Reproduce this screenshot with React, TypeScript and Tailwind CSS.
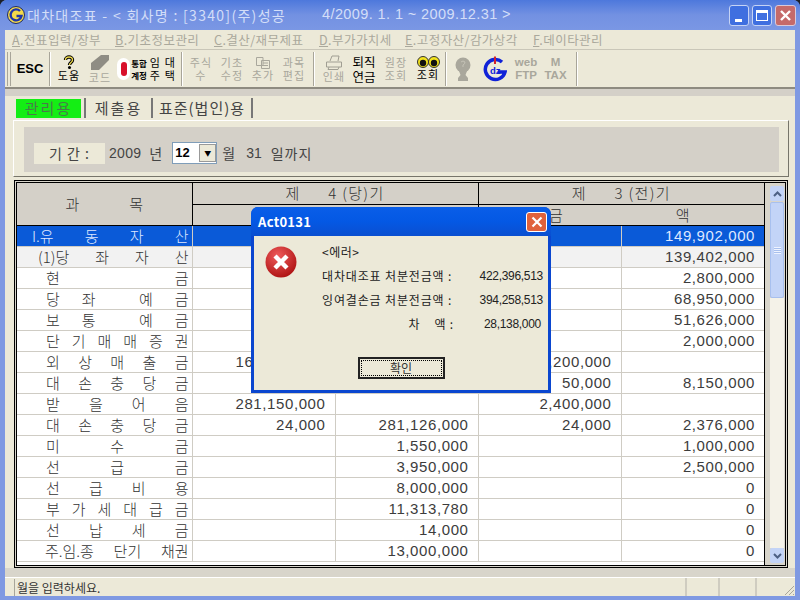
import * as React from "react";

const rows: { label: string[]; start: string; c: string[]; kind?: string }[] = [
  { label: ["I.유", "동", "자", "산"], start: "pl-[15px]", c: ["", "", "", "149,902,000"], kind: "sel" },
  { label: ["(1)당", "좌", "자", "산"], start: "pl-[21px]", c: ["", "", "", "139,402,000"], kind: "sub" },
  { label: ["현", "금"], start: "pl-[29px]", c: ["", "", "", "2,800,000"] },
  { label: ["당", "좌", "", "예", "금"], start: "pl-[29px]", c: ["", "", "", "68,950,000"] },
  { label: ["보", "통", "", "예", "금"], start: "pl-[29px]", c: ["", "", "", "51,626,000"] },
  { label: ["단", "기", "매", "매", "증", "권"], start: "pl-[29px]", c: ["", "", "", "2,000,000"] },
  { label: ["외", "상", "매", "출", "금"], start: "pl-[29px]", c: ["168,000,000", "", "8,200,000", ""] },
  { label: ["대", "손", "충", "당", "금"], start: "pl-[29px]", c: ["", "", "50,000", "8,150,000"] },
  { label: ["받", "을", "어", "음"], start: "pl-[29px]", c: ["281,150,000", "", "2,400,000", ""] },
  { label: ["대", "손", "충", "당", "금"], start: "pl-[29px]", c: ["24,000", "281,126,000", "24,000", "2,376,000"] },
  { label: ["미", "수", "금"], start: "pl-[29px]", c: ["", "1,550,000", "", "1,000,000"] },
  { label: ["선", "급", "금"], start: "pl-[29px]", c: ["", "3,950,000", "", "2,500,000"] },
  { label: ["선", "급", "비", "용"], start: "pl-[29px]", c: ["", "8,000,000", "", "0"] },
  { label: ["부", "가", "세", "대", "급", "금"], start: "pl-[29px]", c: ["", "11,313,780", "", "0"] },
  { label: ["선", "납", "세", "금"], start: "pl-[29px]", c: ["", "14,000", "", "0"] },
  { label: ["주.임.종", "단기", "채권"], start: "pl-[28px]", c: ["", "13,000,000", "", "0"] },
];

const menus = [
  { key: "A", text: ".전표입력/장부", w: "w-[103px]" },
  { key: "B", text: ".기초정보관리", w: "w-[99px]" },
  { key: "C", text: ".결산/재무제표", w: "w-[105px]" },
  { key: "D", text: ".부가가치세", w: "w-[86px]" },
  { key: "E", text: ".고정자산/감가상각", w: "w-[128px]" },
  { key: "F", text: ".데이타관리", w: "w-[90px]" },
];

function Sep() {
  return <div className="mx-[3px] h-[34px] w-[2px] shrink-0 border-l border-r border-l-[#a8a599] border-r-white" />;
}

function Tool({ w, top, bottom, dim }: { w: string; top?: React.ReactNode; bottom: React.ReactNode; dim?: boolean }) {
  return (
    <div className={`${w} flex shrink-0 flex-col items-center justify-center text-[11px] leading-[13px] tracking-[1.2px] ${dim ? "text-[#a9a79c]" : "text-black"}`}>
      {top}
      <span className="whitespace-pre text-center">{bottom}</span>
    </div>
  );
}

function Cell({ v, sel }: { v: string; sel: boolean }) {
  return (
    <td className={`h-[21px] border-b border-l border-[#cfccc4] p-0 pr-[9px] text-right align-middle font-['Liberation_Sans'] text-[15px] leading-[20px] tracking-[0.6px] ${sel ? "text-[#dfe8ff]" : "text-[#3c3c3c]"}`}>
      {v}
    </td>
  );
}

function DialogLine({ label, value, vw }: { label: React.ReactNode; value: string; vw: string }) {
  return (
    <div className="flex h-[24px] items-center text-[12px] tracking-[0.85px] text-[#222]">
      <div className="w-[133px] shrink-0 whitespace-pre">{label}</div>
      <div className={`${vw} text-right font-['Liberation_Sans'] text-[12px] tracking-[-0.3px]`}>{value}</div>
    </div>
  );
}

export default function App() {
  return (
    <div className="relative h-[600px] w-[800px] overflow-hidden bg-[#1b1f28] font-['Noto_Sans_CJK_KR','Liberation_Sans',sans-serif] text-[#333] select-none">
      <div className="flex h-full flex-col overflow-hidden rounded-t-[7px] bg-[#7f99e2] px-[5px] pb-[4px]">
        {/* title bar */}
        <div className="-mx-[5px] flex h-[30px] shrink-0 items-center bg-gradient-to-b from-[#4d78dc] via-[#7391e2] to-[#7a97e4] pl-[7px] pr-[4px]">
          <svg width="18" height="18" viewBox="0 0 18 18" className="shrink-0">
            <circle cx="9" cy="9" r="8.5" fill="#f3d94a" stroke="#1c2a6a" />
            <path d="M13 5 A5.5 5.5 0 1 0 14.5 10 H9.5" fill="none" stroke="#1f36a8" strokeWidth="2.4" />
          </svg>
          <span className="ml-[2px] w-[295px] shrink-0 whitespace-pre text-[14px] tracking-[1.3px] text-[#d3def8]">대차대조표 - &lt; 회사명 : [3340](주)성공</span>
          <span className="whitespace-pre font-['Liberation_Sans'] text-[14.5px] tracking-[0.4px] text-[#d3def8]">4/2009. 1. 1 ~ 2009.12.31 &gt;</span>
          <div className="ml-auto flex gap-[3px]">
            <div className="flex h-[21px] w-[20px] items-end rounded-[3px] border border-[#c5d3f5] bg-[#3f6fe0] pb-[3px] pl-[5px]">
              <div className="h-[3px] w-[7px] bg-white" />
            </div>
            <div className="flex h-[21px] w-[20px] items-center justify-center rounded-[3px] border border-[#c5d3f5] bg-[#3f6fe0]">
              <div className="h-[11px] w-[12px] border border-t-[3px] border-white" />
            </div>
            <div className="flex h-[21px] w-[21px] items-center justify-center rounded-[3px] border border-[#d9c9d9] bg-[#c56a6a]">
              <svg width="13" height="13" viewBox="0 0 13 13"><path d="M2 2 L11 11 M11 2 L2 11" stroke="#fff" strokeWidth="2.4" /></svg>
            </div>
          </div>
        </div>

        <div className="flex min-h-0 flex-1 flex-col bg-[#ece9d8]">
          {/* menu */}
          <div className="flex h-[20px] shrink-0 items-center border-b border-[#c9c6b8] pl-[7px] pt-[1px] text-[12.5px] tracking-[0.45px] text-[#aaa89c]">
            {menus.map((m) => (
              <div key={m.key} className={`${m.w} shrink-0 whitespace-pre`}>
                <span className="underline">{m.key}</span>
                {m.text}
              </div>
            ))}
          </div>

          {/* toolbar */}
          <div className="flex h-[39px] shrink-0 items-center border-b-2 border-[#8e8b80] pl-[2px]">
            <div className="mr-[3px] h-[34px] w-[4px] shrink-0 border-l border-r border-[#a8a599]" />
            <Tool w="w-[32px]" bottom={<span className="font-['Liberation_Sans'] text-[13px] font-bold tracking-normal">ESC</span>} />
            <Sep />
            <Tool
              w="w-[30px]"
              top={
                <svg width="14" height="14" viewBox="0 0 14 14">
                  <path d="M3.5 5 C3.5 1 10.5 1 10.5 5 C10.5 7.5 7.5 7.5 7.5 10" fill="none" stroke="#000" strokeWidth="3.4" />
                  <path d="M3.5 5 C3.5 1 10.5 1 10.5 5 C10.5 7.5 7.5 7.5 7.5 10" fill="none" stroke="#e8d44a" strokeWidth="1.4" />
                  <circle cx="7.5" cy="12.5" r="1.5" fill="#000" />
                </svg>
              }
              bottom="도움"
            />
            <Tool
              w="w-[32px]"
              dim
              top={
                <svg width="20" height="17" viewBox="0 0 20 17"><path d="M1 16 L1 9 L11 1 L19 1 L19 6 L9 16 Z" fill="#8f8d84" /></svg>
              }
              bottom="코드"
            />
            <div className="flex w-[32px] shrink-0 items-center justify-center gap-[1px]">
              <div className="flex h-[22px] w-[13px] shrink-0 items-center justify-center rounded-full bg-white">
                <div className="h-[14px] w-[6px] rounded-full bg-[#d8102a]" />
              </div>
              <div className="shrink-0 whitespace-pre text-[8.5px] font-bold leading-[12px] text-black">{"통합\n계정"}</div>
            </div>
            <Tool w="w-[30px]" bottom={"임 대\n주 택"} />
            <Sep />
            <Tool w="w-[30px]" dim bottom={"주식\n수"} />
            <Tool w="w-[32px]" dim bottom={"기초\n수정"} />
            <Tool
              w="w-[30px]"
              dim
              top={
                <svg width="16" height="13" viewBox="0 0 16 13" fill="none" stroke="#a9a79c"><path d="M1.5 1.5 H8 V9.5 H1.5 Z M6.5 4.5 H14.5 V12.5 H6.5 Z M8 7 H13 M8 9.5 H13" /></svg>
              }
              bottom="추가"
            />
            <Tool w="w-[32px]" dim bottom={"과목\n편집"} />
            <Sep />
            <Tool
              w="w-[32px]"
              dim
              top={
                <svg width="18" height="15" viewBox="0 0 18 15" fill="none" stroke="#a09e93"><path d="M5 6 L7 1 H14 L13 6 M1.5 7 H16.5 V12 H1.5 Z M4 12 L3 14.5 H13 L14 12" /></svg>
              }
              bottom="인쇄"
            />
            <Tool w="w-[28px]" bottom={<span className="text-[12.5px] leading-[15px] tracking-normal">{"퇴직\n연금"}</span>} />
            <Tool w="w-[36px]" dim bottom={"원장\n조회"} />
            <Tool
              w="w-[28px]"
              top={
                <svg width="23" height="12" viewBox="0 0 23 12">
                  <circle cx="6" cy="6" r="5.5" fill="#f2e21c" stroke="#333" />
                  <circle cx="6" cy="7" r="3.2" fill="#111" />
                  <circle cx="17" cy="6" r="5.5" fill="#f2e21c" stroke="#333" />
                  <circle cx="17" cy="7" r="3.2" fill="#111" />
                </svg>
              }
              bottom="조회"
            />
            <Sep />
            <div className="flex w-[26px] shrink-0 justify-center">
              <svg width="16" height="24" viewBox="0 0 16 24">
                <ellipse cx="8" cy="8" rx="7.5" ry="7.5" fill="#a9a79c" />
                <path d="M4 14 H12 L10.5 18 L13 21 V24 H3 V21 L5.5 18 Z" fill="#a9a79c" />
                <path d="M6 5 Q8 3 10 5 Q10 7 8 8 V10" stroke="#c4c2b6" fill="none" />
              </svg>
            </div>
            <div className="flex w-[38px] shrink-0 justify-center">
              <svg width="24" height="26" viewBox="0 0 24 26">
                <path d="M19 6 A10 10 0 1 0 22 16 H15" fill="none" stroke="#1022d8" strokeWidth="3.5" />
                <path d="M11 0.5 H13 V8 H11 Z" fill="#d3222a" />
                <text x="7" y="18" fontSize="9.5" fontWeight="700" fontFamily="'Liberation Sans'" fill="#1022d8">dz</text>
              </svg>
            </div>
            <div className="w-[24px] shrink-0 text-center font-['Liberation_Sans'] text-[11.5px] font-bold leading-[13px] text-[#a9a79c]">
              web
              <br />
              FTP
            </div>
            <div className="w-[35px] shrink-0 text-center font-['Liberation_Sans'] text-[11.5px] font-bold leading-[13px] text-[#a9a79c]">
              M
              <br />
              TAX
            </div>
            <Sep />
          </div>

          {/* body */}
          <div className="flex min-h-0 flex-1 flex-col">
            <div className="h-[7px] shrink-0 bg-[#d4d0c8]" />
            {/* tabs */}
            <div className="flex h-[24px] shrink-0 items-center pl-[11px] text-[15px] tracking-[1px] text-[#444]">
              <div className="flex h-[19px] w-[65px] items-center justify-center bg-[#14ee14] tracking-[2px] text-[#4a7a4a]">관리용</div>
              <div className="ml-[3px] h-[20px] w-[2px] bg-[#777]" />
              <div className="w-[65px] text-center tracking-[2px]">제출용</div>
              <div className="h-[20px] w-[2px] bg-[#777]" />
              <div className="w-[98px] text-center">표준(법인)용</div>
              <div className="h-[20px] w-[2px] bg-[#777]" />
            </div>

            {/* period group */}
            <div className="ml-[8px] h-[57px] w-[776px] shrink-0 border-b border-l border-r border-t border-b-[#77756a] border-l-white border-r-[#77756a] border-t-white pl-[10px] pr-[9px] pt-[6px]">
              <div className="flex h-[45px] items-center bg-[#d4d0c8] pl-[10px] pt-[7px] text-[14px] text-[#444]">
                <div className="flex h-[21px] w-[71px] items-center justify-center whitespace-pre bg-[#ece9d8] tracking-[1px]">기 간 :</div>
                <div className="ml-[4px] font-['Liberation_Sans'] tracking-[0.3px]">2009</div>
                <div className="ml-[8px]">년</div>
                <div className="ml-[10px] flex h-[22px] w-[45px] items-center border border-[#7f9db9] bg-white pl-[2px]">
                  <span className="font-['Liberation_Sans'] text-[13px] font-bold text-black">12</span>
                  <div className="ml-auto flex h-[18px] w-[17px] items-center justify-center border border-[#999] bg-[#ece9d8] text-[7px] text-black">▼</div>
                </div>
                <div className="ml-[5px]">월</div>
                <div className="ml-[11px] font-['Liberation_Sans']">31</div>
                <div className="ml-[9px] tracking-[1px]">일까지</div>
              </div>
            </div>

            {/* table frame */}
            <div className="ml-[9px] mt-[3px] flex h-[388px] w-[774px] shrink-0 border-[3px] border-double border-black bg-[#d8d5cb]">
              <div className="h-[383px] w-[748px] shrink-0 overflow-hidden border-b border-r border-black bg-white">
                <table className="w-[747px] table-fixed border-collapse text-[15px] font-light leading-[20px] text-[#333]">
                  <colgroup>
                    <col className="w-[175px]" />
                    <col className="w-[143px]" />
                    <col className="w-[143px]" />
                    <col className="w-[143px]" />
                    <col className="w-[143px]" />
                  </colgroup>
                  <thead>
                    <tr className="h-[21px] bg-[#d4d0c8]">
                      <th rowSpan={2} className="border-b border-black p-0 text-center font-light">
                        <div className="flex justify-center gap-[50px]"><span>과</span><span>목</span></div>
                      </th>
                      <th colSpan={2} className="border-b border-l border-black p-0 text-center font-light whitespace-pre tracking-[1.3px]">제      4 (당)기</th>
                      <th colSpan={2} className="border-b border-l border-black p-0 text-center font-light whitespace-pre tracking-[1.3px]">제      3 (전)기</th>
                    </tr>
                    <tr className="h-[21px] bg-[#d4d0c8]">
                      <th colSpan={2} className="border-b border-l border-black p-0 font-light" />
                      <th colSpan={2} className="border-b border-l border-black p-0 font-light">
                        <div className="flex justify-center gap-[113px] pr-[4px]"><span>금</span><span>액</span></div>
                      </th>
                    </tr>
                  </thead>
                  <tbody>
                    {rows.map((r, i) => (
                      <tr key={i} className={r.kind === "sel" ? "bg-[#0a5ad8]" : r.kind === "sub" ? "bg-[#f2f2f2]" : ""}>
                        <td className={`h-[21px] border-b border-[#cfccc4] p-0 ${r.kind === "sel" ? "text-[#dfe8ff]" : ""}`}>
                          <div className={`flex justify-between pr-[3px] leading-[20px] ${r.start}`}>
                            {r.label.map((ch, j) => (
                              <span key={j}>{ch}</span>
                            ))}
                          </div>
                        </td>
                        {r.c.map((v, j) => (
                          <Cell key={j} v={v} sel={r.kind === "sel"} />
                        ))}
                      </tr>
                    ))}
                  </tbody>
                </table>
              </div>

              {/* scrollbar */}
              <div className="flex flex-1 flex-col items-center pb-[2px] pl-[5px] pr-[2px] pt-[3px]">
                <div className="flex h-[15px] w-[14px] shrink-0 items-center justify-center rounded-[2px] bg-[#c3d4f7]">
                  <svg width="9" height="6" viewBox="0 0 9 6"><path d="M1 5 L4.5 1.5 L8 5" fill="none" stroke="#4d6185" strokeWidth="2" /></svg>
                </div>
                <div className="mt-[1px] flex h-[96px] w-[14px] shrink-0 items-center justify-center rounded-[2px] border border-[#a8c0ee] bg-[#c3d4f7]">
                  <div className="h-[7px] w-[7px] bg-[repeating-linear-gradient(#eef3ff_0,#eef3ff_1px,#a8c0ee_1px,#a8c0ee_2px)]" />
                </div>
                <div className="w-[14px] flex-1 bg-[#f4f2e8]" />
                <div className="flex h-[15px] w-[14px] shrink-0 items-center justify-center rounded-[2px] bg-[#c3d4f7]">
                  <svg width="9" height="6" viewBox="0 0 9 6"><path d="M1 1 L4.5 4.5 L8 1" fill="none" stroke="#4d6185" strokeWidth="2" /></svg>
                </div>
              </div>
            </div>
            <div className="min-h-0 flex-1 bg-[#d8d5cb]" />
          </div>

          {/* status bar */}
          <div className="flex h-[19px] shrink-0 items-center border-t border-white pl-[9px] text-[12px] text-[#333]">
            <div className="flex-1 border-l border-[#a8a599] pl-[2px] leading-[17px]">월을 입력하세요.</div>
            <div className="h-full w-[33px] border-l-2 border-[#cfccc0]" />
            <div className="h-full w-[37px] border-l-2 border-[#cfccc0]" />
            <div className="flex h-full w-[40px] items-end justify-end border-l-2 border-[#cfccc0]">
              <svg width="12" height="12" viewBox="0 0 12 12" stroke="#a8a599"><path d="M11 2 L2 11 M11 6 L6 11 M11 10 L10 11" /></svg>
            </div>
          </div>
        </div>
      </div>

      {/* error dialog */}
      <div className="absolute left-[251px] top-[207px] flex h-[186px] w-[300px] flex-col overflow-hidden rounded-t-[7px] bg-[#0a46cf] px-[3px] pb-[3px]">
        <div className="-mx-[3px] flex h-[29px] shrink-0 items-center bg-gradient-to-b from-[#0a5ee8] via-[#0458e4] to-[#0a4fd0] pl-[7px] pr-[4px]">
          <span className="text-[13px] font-bold tracking-[0.3px] text-white">Act0131</span>
          <div className="ml-auto flex h-[20px] w-[21px] items-center justify-center rounded-[3px] border border-white bg-[#e0623c]">
            <svg width="12" height="12" viewBox="0 0 12 12"><path d="M1.5 1.5 L10.5 10.5 M10.5 1.5 L1.5 10.5" stroke="#fff" strokeWidth="2.2" /></svg>
          </div>
        </div>
        <div className="flex min-h-0 flex-1 flex-col items-center bg-[#ece9d8] pt-[6px]">
          <div className="flex w-full">
            <div className="ml-[11px] mt-[4px] w-[57px] shrink-0">
              <svg width="32" height="32" viewBox="0 0 32 32">
                <defs>
                  <radialGradient id="err" cx="0.4" cy="0.3" r="0.8">
                    <stop offset="0" stopColor="#ef5b5b" />
                    <stop offset="1" stopColor="#a80c0c" />
                  </radialGradient>
                </defs>
                <circle cx="16" cy="16" r="15.5" fill="url(#err)" />
                <path d="M10 10 L22 22 M22 10 L10 22" stroke="#fff" strokeWidth="4.4" />
              </svg>
            </div>
            <div className="min-w-0 flex-1">
              <div className="flex h-[20px] items-center text-[12px] tracking-[0.5px] text-[#222]">&lt;에러&gt;</div>
              <div className="mt-[2px]">
                <DialogLine label="대차대조표 처분전금액 :" value="422,396,513" vw="w-[88px]" />
                <DialogLine label="잉여결손금 처분전금액 :" value="394,258,513" vw="w-[88px]" />
                <DialogLine
                  label={
                    <div className="flex justify-end gap-[14px] pr-[1px]"><span>차</span><span>액 :</span></div>
                  }
                  value="28,138,000"
                  vw="w-[86px]"
                />
              </div>
            </div>
          </div>
          <div className="mt-[21px] flex h-[22px] w-[87px] shrink-0 items-center justify-center border-2 border-[#222] p-[1px] text-[12px]">
            <div className="flex h-full w-full items-center justify-center border border-dotted border-black">확인</div>
          </div>
        </div>
      </div>
    </div>
  );
}
